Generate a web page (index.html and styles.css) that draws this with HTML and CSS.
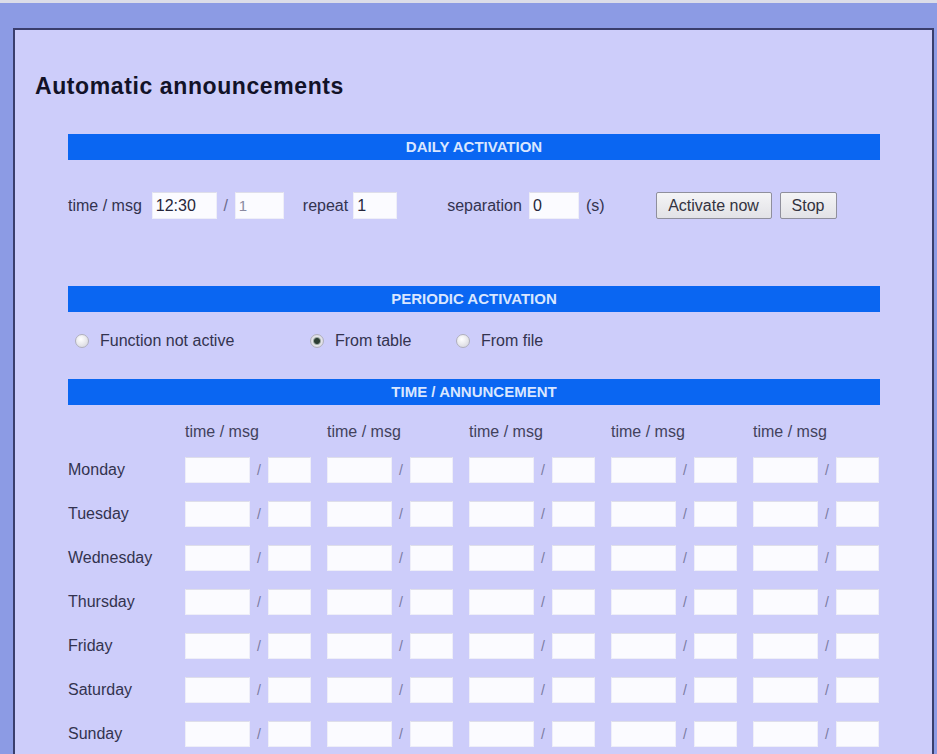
FILE: index.html
```html
<!DOCTYPE html>
<html lang="en">

<head>
    <meta charset="UTF-8">
    <meta name="viewport" content="width=device-width, initial-scale=1.0">
    <title>Automatic announcements</title>
    <link rel="stylesheet" href="styles.css">
</head>

<body>
    <div class="frame">
        <div class="panel">
            <h1>Automatic announcements</h1>

            <div class="section">
                <div class="bar">DAILY ACTIVATION</div>

                <div class="daily">
                    <span class="lbl">time / msg</span>
                    <input type="text" class="in-time" value="12:30">
                    <span class="slash">/</span>
                    <input type="text" class="in-msg dim" value="1">
                    <span class="lbl lbl-repeat">repeat</span>
                    <input type="text" class="in-repeat" value="1">
                    <span class="lbl lbl-sep">separation</span>
                    <input type="text" class="in-sep" value="0">
                    <span class="lbl lbl-s">(s)</span>
                    <button class="btn btn-activate">Activate now</button>
                    <button class="btn btn-stop">Stop</button>
                </div>

                <div class="bar bar-periodic">PERIODIC ACTIVATION</div>

                <div class="radios">
                    <label class="opt"><input type="radio" name="mode"> Function not active</label>
                    <label class="opt"><input type="radio" name="mode" checked> From table</label>
                    <label class="opt"><input type="radio" name="mode"> From file</label>
                </div>

                <div class="bar">TIME / ANNUNCEMENT</div>

                <div class="schedule" id="schedule">
                    <div class="row head">
                        <span class="day"></span>
                        <span class="col-head">time / msg</span>
                        <span class="col-head">time / msg</span>
                        <span class="col-head">time / msg</span>
                        <span class="col-head">time / msg</span>
                        <span class="col-head">time / msg</span>
                    </div>
                </div>
            </div>
        </div>
    </div>

    <script>
        const days = ['Monday', 'Tuesday', 'Wednesday', 'Thursday', 'Friday', 'Saturday', 'Sunday'];
        const schedule = document.getElementById('schedule');

        days.forEach(day => {
            const row = document.createElement('div');
            row.className = 'row';
            let html = `<span class="day">${day}</span>`;
            for (let i = 0; i < 5; i++) {
                html += `<span class="slot"><input type="text" class="t"><span class="sl">/</span><input type="text" class="m"></span>`;
            }
            row.innerHTML = html;
            schedule.appendChild(row);
        });
    </script>
</body>

</html>
```

FILE: styles.css
```css
body {
    margin: 0;
    background: #8c9be4;
    border-top: 3px solid #dcdde8;
    font-family: "Liberation Sans", Arial, sans-serif;
    color: #2e2e4a;
}

.frame {
    padding: 25px 3px 0 13px;
}

.panel {
    background: #cdcdfa;
    border: 2px solid #3a3e6c;
    border-bottom: none;
    padding-bottom: 40px;
}

h1 {
    margin: 42px 0 0 20px;
    font-size: 23px;
    line-height: 28px;
    letter-spacing: 0.6px;
    color: #121228;
}

.section {
    margin: 34px 52px 0 53px;
}

.bar {
    height: 26px;
    line-height: 26px;
    background: #0a66f2;
    color: #d9e6ff;
    font-weight: bold;
    font-size: 15px;
    text-align: center;
}

input[type="text"] {
    box-sizing: border-box;
    height: 27px;
    margin: 0;
    padding: 0 3px;
    border: 1px solid #eeeef8;
    border-top-color: #dedeea;
    background: #fbfbff;
    font-family: "Liberation Sans", Arial, sans-serif;
    font-size: 16px;
    color: #26263a;
    outline: none;
}

/* daily row */
.daily {
    display: flex;
    align-items: center;
    height: 27px;
    margin-top: 32px;
    font-size: 16px;
}

.daily .lbl {
    color: #33334f;
}

.in-time {
    width: 65px;
    margin-left: 10px !important;
}

.slash {
    width: 18px;
    text-align: center;
    color: #6a6a8c;
}

.in-msg {
    width: 49px;
}

.dim {
    color: #8a8aa0 !important;
    font-size: 15px !important;
}

.lbl-repeat {
    margin-left: 19px;
}

.in-repeat {
    width: 44px;
    margin-left: 5px !important;
}

.lbl-sep {
    margin-left: 50px;
}

.in-sep {
    width: 50px;
    margin-left: 7px !important;
}

.lbl-s {
    margin-left: 7px;
}

.btn {
    box-sizing: border-box;
    height: 27px;
    padding: 0 11px;
    border: 1px solid #8f8f9c;
    border-radius: 2px;
    background: linear-gradient(#f4f4f6, #e2e2e6);
    font-family: "Liberation Sans", Arial, sans-serif;
    font-size: 16px;
    color: #333340;
}

.btn-activate {
    width: 116px;
    margin-left: 51px;
}

.btn-stop {
    width: 57px;
    margin-left: 8px;
}

/* periodic */
.bar-periodic {
    margin-top: 67px;
}

.radios {
    display: grid;
    grid-template-columns: 235px 146px auto;
    align-items: center;
    height: 24px;
    margin: 17px 0 26px 7px;
    font-size: 16px;
    color: #33334f;
}

.opt {
    display: flex;
    align-items: center;
}

.opt input {
    appearance: none;
    width: 14px;
    height: 14px;
    margin: 0 11px 0 0;
    border: 1px solid #b0b0bc;
    border-radius: 50%;
    background: radial-gradient(circle at 40% 35%, #ffffff, #d2d2da);
}

.opt input:checked {
    background: radial-gradient(circle, #2c3e34 0 2.5px, #9aa6a0 3.5px, #e4e4ea 4.5px, #d0d0d8);
}

/* schedule table */
.schedule {
    display: flex;
    flex-direction: column;
    gap: 18px;
    margin-top: 14px;
}

.row {
    display: flex;
    align-items: center;
    gap: 16px;
    height: 26px;
    font-size: 16px;
}

.row.head {
    margin-bottom: -6px;
    color: #42425c;
}

.day {
    width: 101px;
    color: #33334f;
}

.col-head {
    width: 126px;
}

.slot {
    display: flex;
    align-items: center;
    width: 126px;
}

.slot input {
    height: 26px;
}

.slot .t {
    width: 65px;
}

.slot .sl {
    width: 18px;
    text-align: center;
    font-size: 14px;
    color: #7a7aa0;
}

.slot .m {
    width: 43px;
}
```
